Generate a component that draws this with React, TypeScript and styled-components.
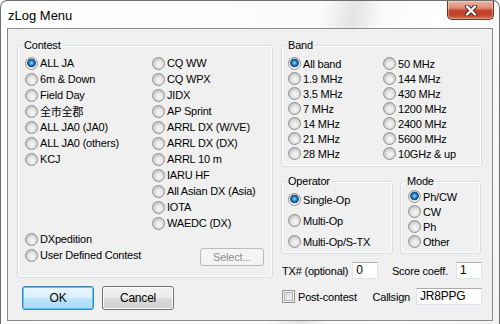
import styled, { createGlobalStyle } from 'styled-components';

const GlobalStyle = createGlobalStyle`
  html, body { margin: 0; padding: 0; background: #ffffff; }
  body {
    width: 500px;
    height: 324px;
    overflow: hidden;
    font-family: "Liberation Sans", "Noto Sans CJK JP", sans-serif;
    font-size: 11px;
    letter-spacing: -0.2px;
    color: #000;
  }
`;

const contestLeft = ['ALL JA', '6m & Down', 'Field Day', '全市全郡', 'ALL JA0 (JA0)', 'ALL JA0 (others)', 'KCJ'];
const contestRight = [
  'CQ WW', 'CQ WPX', 'JIDX', 'AP Sprint', 'ARRL DX (W/VE)', 'ARRL DX (DX)',
  'ARRL 10 m', 'IARU HF', 'All Asian DX (Asia)', 'IOTA', 'WAEDC (DX)',
];
const bandLeft = ['All band', '1.9 MHz', '3.5 MHz', '7 MHz', '14 MHz', '21 MHz', '28 MHz'];
const bandRight = ['50 MHz', '144 MHz', '430 MHz', '1200 MHz', '2400 MHz', '5600 MHz', '10GHz & up'];
const operators = ['Single-Op', 'Multi-Op', 'Multi-Op/S-TX'];
const modes = ['Ph/CW', 'CW', 'Ph', 'Other'];

const Radio = ({ label, on, h }: { label: string; on?: boolean; h: number }) => (
  <RadioRow $h={h}>
    <RadioDot $on={on} />
    <span>{label}</span>
  </RadioRow>
);

const App = () => (
  <>
    <GlobalStyle />
    <Window>
      <TitleBar>
        <Title>zLog Menu</Title>
        <CloseButton>
          <svg width="14" height="11" viewBox="0 0 14 11">
            <path d="M3 1.5 L11 9.5 M11 1.5 L3 9.5" stroke="#4d2a22" strokeWidth="4.2" strokeLinecap="round" />
            <path d="M3 1.5 L11 9.5 M11 1.5 L3 9.5" stroke="#ffffff" strokeWidth="2.4" strokeLinecap="round" />
          </svg>
        </CloseButton>
      </TitleBar>
      <Client>
        <LeftColumn>
          <ContestBox>
            <Caption>Contest</Caption>
            <ContestGrid>
              <RadioList>
                {contestLeft.map((c, i) => <Radio key={c} label={c} on={i === 0} h={16} />)}
              </RadioList>
              <RadioList>
                {contestRight.map((c) => <Radio key={c} label={c} h={16} />)}
              </RadioList>
            </ContestGrid>
            <ContestFooter>
              <RadioList>
                <Radio label="DXpedition" h={16} />
                <Radio label="User Defined Contest" h={16} />
              </RadioList>
              <SelectButton>Select...</SelectButton>
            </ContestFooter>
          </ContestBox>
          <ButtonRow>
            <PushButton $default>OK</PushButton>
            <PushButton>Cancel</PushButton>
          </ButtonRow>
        </LeftColumn>
        <RightColumn>
          <BandBox>
            <Caption>Band</Caption>
            <BandGrid>
              <RadioList>
                {bandLeft.map((b, i) => <Radio key={b} label={b} on={i === 0} h={15} />)}
              </RadioList>
              <RadioList>
                {bandRight.map((b) => <Radio key={b} label={b} h={15} />)}
              </RadioList>
            </BandGrid>
          </BandBox>
          <SmallBoxes>
            <OperatorBox>
              <Caption>Operator</Caption>
              <RadioList>
                {operators.map((o, i) => <Radio key={o} label={o} on={i === 0} h={21} />)}
              </RadioList>
            </OperatorBox>
            <ModeBox>
              <Caption>Mode</Caption>
              <RadioList>
                {modes.map((m, i) => <Radio key={m} label={m} on={i === 0} h={15} />)}
              </RadioList>
            </ModeBox>
          </SmallBoxes>
          <FieldRow $top={8}>
            <FieldPair $gap={4}>
              <span>TX# (optional)</span>
              <TextBox $w={26}>0</TextBox>
            </FieldPair>
            <FieldPair $gap={8}>
              <span>Score coeff.</span>
              <TextBox $w={26}>1</TextBox>
            </FieldPair>
          </FieldRow>
          <FieldRow $top={9}>
            <CheckLabel>
              <CheckBox />
              <span>Post-contest</span>
            </CheckLabel>
            <FieldPair $gap={6}>
              <span>Callsign</span>
              <TextBox $w={66}>JR8PPG</TextBox>
            </FieldPair>
          </FieldRow>
        </RightColumn>
      </Client>
    </Window>
  </>
);

const Window = styled.div`
  width: 500px;
  height: 324px;
  box-sizing: border-box;
  display: flex;
  flex-direction: column;
  padding: 0 6px 3px 6px;
  border: 1px solid #6e6e6e;
  border-bottom: none;
  border-radius: 7px 7px 0 0;
  background: linear-gradient(
    100deg,
    #ffffff 0%,
    #fbfbfb 58%,
    #e4e4e4 64%,
    #fafafa 69%,
    #ffffff 80%,
    #f3f3f3 100%
  );
`;

const TitleBar = styled.div`
  height: 27px;
  display: flex;
  justify-content: space-between;
  align-items: flex-start;
`;

const Title = styled.div`
  font-family: "Liberation Sans", "Noto Sans", sans-serif;
  font-size: 13px;
  letter-spacing: 0;
  line-height: 15px;
  padding: 7px 0 0 1px;
  color: #000;
`;

const CloseButton = styled.div`
  width: 47px;
  height: 19px;
  box-sizing: border-box;
  margin-right: -1px;
  display: flex;
  align-items: center;
  justify-content: center;
  border: 1px solid #6b3328;
  border-top: none;
  border-radius: 0 0 5px 5px;
  background: linear-gradient(
    180deg,
    #eab3a5 0%,
    #dc8a74 40%,
    #c5452b 52%,
    #c0432a 75%,
    #d3704f 100%
  );
  box-shadow: inset 0 0 0 1px rgba(255, 255, 255, 0.35);
`;

const Client = styled.div`
  flex: 1;
  border: 1px solid #8a8a8a;
  background: #f0f0f0;
  display: grid;
  grid-template-columns: 256px 201px;
  column-gap: 8px;
  align-items: start;
  padding: 16px 0 0 9px;
`;

const LeftColumn = styled.div`
  display: flex;
  flex-direction: column;
`;

const RightColumn = styled.div`
  display: flex;
  flex-direction: column;
`;

const Group = styled.div`
  position: relative;
  box-sizing: border-box;
  border: 1px solid #d5dfe5;
  border-radius: 3px;
  box-shadow: inset 0 0 0 1px #ffffff;
`;

const Caption = styled.span`
  position: absolute;
  top: -8px;
  left: 5px;
  padding: 0 1px;
  line-height: 14px;
  background: #f0f0f0;
`;

const ContestBox = styled(Group)`
  height: 233px;
  padding: 9px 8px 0 7px;
`;

const ContestGrid = styled.div`
  display: grid;
  grid-template-columns: 127px 1fr;
`;

const ContestFooter = styled.div`
  display: flex;
  justify-content: space-between;
  align-items: flex-start;
`;

const BandBox = styled(Group)`
  height: 122px;
  padding: 10px 0 0 6px;
`;

const BandGrid = styled.div`
  display: grid;
  grid-template-columns: 95px 1fr;
`;

const SmallBoxes = styled.div`
  display: flex;
  gap: 7px;
  margin-top: 14px;
  width: 200px;
`;

const OperatorBox = styled(Group)`
  width: 112px;
  height: 73px;
  padding: 7px 0 0 6px;
`;

const ModeBox = styled(Group)`
  width: 81px;
  height: 73px;
  padding: 7px 0 0 7px;
`;

const RadioList = styled.div`
  display: flex;
  flex-direction: column;
`;

const RadioRow = styled.div<{ $h: number }>`
  height: ${(p) => p.$h}px;
  display: flex;
  align-items: center;
  gap: 2px;
  white-space: nowrap;
`;

const RadioDot = styled.span<{ $on?: boolean }>`
  flex: none;
  width: 13px;
  height: 13px;
  box-sizing: border-box;
  border-radius: 50%;
  border: 1px solid #8e8f8f;
  background: ${(p) =>
    p.$on
      ? 'radial-gradient(circle at 50% 45%, #a8e4ff 0, #3a9de0 1.6px, #12569a 3.4px, #2c4c6a 4px, #dcdcdc 4.6px, #f6f6f6 5.5px)'
      : 'radial-gradient(circle at 55% 60%, #f7f7f7 0, #ececec 2.5px, #d6d6d6 5px, #c6c6c6 6px)'};
`;

const SelectButton = styled.div`
  margin-top: 17px;
  width: 64px;
  height: 18px;
  box-sizing: border-box;
  border: 1px solid #b8bcbf;
  border-radius: 3px;
  background: #f4f4f4;
  color: #8d8d8d;
  display: flex;
  align-items: center;
  justify-content: center;
`;

const ButtonRow = styled.div`
  display: flex;
  gap: 8px;
  margin-top: 8px;
  padding-left: 5px;
`;

const PushButton = styled.div<{ $default?: boolean }>`
  width: 72px;
  height: 24px;
  box-sizing: border-box;
  border-radius: 3px;
  display: flex;
  align-items: center;
  justify-content: center;
  font-size: 12px;
  border: 1px solid ${(p) => (p.$default ? '#3c7fb1' : '#707070')};
  box-shadow: inset 0 0 0 1px ${(p) => (p.$default ? '#58c8f4' : '#fbfbfb')};
  background: ${(p) =>
    p.$default
      ? 'linear-gradient(180deg, #eaf6fd 0%, #d9f0fc 50%, #bee6fd 51%, #a7d9f5 100%)'
      : 'linear-gradient(180deg, #f2f2f2 0%, #ebebeb 50%, #dddddd 51%, #cfcfcf 100%)'};
`;

const FieldRow = styled.div<{ $top: number }>`
  display: flex;
  align-items: center;
  justify-content: space-between;
  margin-top: ${(p) => p.$top}px;
  padding-left: 1px;
  white-space: nowrap;
`;

const FieldPair = styled.div<{ $gap: number }>`
  display: flex;
  align-items: center;
  gap: ${(p) => p.$gap}px;
`;

const TextBox = styled.div<{ $w: number }>`
  width: ${(p) => p.$w}px;
  height: 17px;
  box-sizing: border-box;
  padding: 0 0 0 3px;
  line-height: 15px;
  font-size: 12px;
  background: #ffffff;
  border: 1px solid #e2e3ea;
  border-top-color: #abadb3;
`;

const CheckLabel = styled.div`
  display: flex;
  align-items: center;
  gap: 3px;
`;

const CheckBox = styled.span`
  width: 13px;
  height: 13px;
  box-sizing: border-box;
  border: 1px solid #8e8f8f;
  background: linear-gradient(135deg, #cdd0d4 0%, #e9e9e9 60%, #f8f8f8 100%);
  box-shadow: inset 0 0 0 1px #f4f4f4, inset 0 0 0 2px #b2b6bb;
`;

export default App;
